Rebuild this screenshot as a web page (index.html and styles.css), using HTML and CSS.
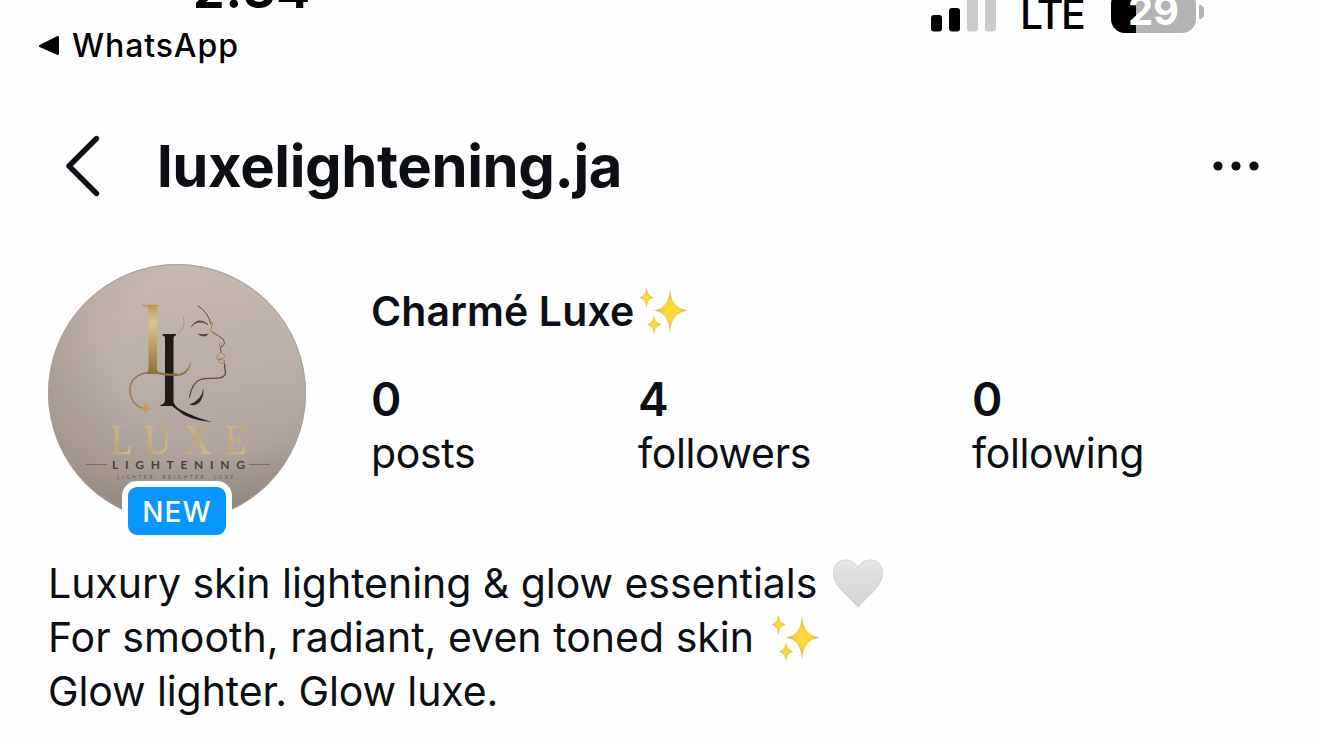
FILE: index.html
```html
<!DOCTYPE html>
<html lang="en">
<head>
<meta charset="utf-8">
<title>luxelightening.ja</title>
<link rel="stylesheet" href="styles.css">
</head>
<body>
<svg class="defs" width="0" height="0" aria-hidden="true">
  <defs>
    <radialGradient id="starFill"><stop offset="0" stop-color="#fde02e"/><stop offset=".45" stop-color="#f8d147"/><stop offset="1" stop-color="#dfa25e"/></radialGradient>
    <symbol id="sparkles" viewBox="0 0 50 50">
      <g fill="url(#starFill)">
        <path d="M31 2Q32 22 48.500 24.500Q32 27 31 47Q30 27 15 24.500Q30 22 31 2Z"/>
        <path d="M7.500 1.500Q8.500 10 14.500 11.500Q8.500 13 7.500 22Q6.500 13 .5 11.500Q6.500 10 7.500 1.500Z"/>
        <path d="M15 29Q16 37 22.500 38.500Q16 40 15 48.500Q14 40 8 38.500Q14 37 15 29Z"/>
      </g>
    </symbol>
  </defs>
</svg>
<header class="status">
  <div class="status-left">
    <div class="time">2:34</div>
    <div class="return">
      <svg width="22" height="22" viewBox="0 0 22 22"><path d="M1.500 10 19 1.200Q21 .5 21 2.500V18.500Q21 20.500 19 19.800L1.500 12Q0 11 1.500 10Z"/></svg>
      <span class="return-label">WhatsApp</span>
    </div>
  </div>
  <div class="status-right">
    <svg class="signal" width="66" height="32" viewBox="0 0 66 32"><rect y="15" width="11" height="16.500" rx="3"/><rect x="18" y="8" width="11" height="23.500" rx="3"/><g fill="#cbcbcb"><rect x="36" y="-4" width="11" height="35.500" rx="3"/><rect x="54" y="-10" width="11" height="41.500" rx="3"/></g></svg>
    <span class="network">LTE</span>
    <div class="battery"><div class="cell"><span>29</span></div><i></i></div>
  </div>
</header>
<nav class="bar">
  <svg class="back" width="36" height="64" viewBox="0 0 36 64"><path d="M31.500 4.500 4 32 31.500 59.500" fill="none" stroke="#0c1014" stroke-width="5.400" stroke-linecap="round" stroke-linejoin="round"/></svg>
  <h1>luxelightening.ja</h1>
  <svg class="more" width="46" height="12" viewBox="0 0 46 12"><g fill="#0c1014"><circle cx="5" cy="6" r="4.600"/><circle cx="23" cy="6" r="4.600"/><circle cx="41" cy="6" r="4.600"/></g></svg>
</nav>
<section class="profile">
  <div class="avatar">
    <svg width="258" height="258" viewBox="48 264 258 258">
      <defs>
        <linearGradient id="paper" x1=".4" y1="0" x2=".55" y2="1"><stop offset="0" stop-color="#c6bab3"/><stop offset=".4" stop-color="#bbb0a9"/><stop offset=".75" stop-color="#b0a59e"/><stop offset="1" stop-color="#968c86"/></linearGradient>
        <radialGradient id="shade" cx=".65" cy=".35" r=".75"><stop offset=".5" stop-color="#786b61" stop-opacity="0"/><stop offset="1" stop-color="#786b61" stop-opacity=".35"/></radialGradient>
        <linearGradient id="gold" x1="0" y1="0" x2="0" y2="1"><stop offset="0" stop-color="#b9975a"/><stop offset=".25" stop-color="#dcc68d"/><stop offset=".6" stop-color="#ba9a5c"/><stop offset="1" stop-color="#8a6c36"/></linearGradient>
        <linearGradient id="letters" x1="0" y1="0" x2="1" y2="1"><stop offset="0" stop-color="#dac596"/><stop offset=".5" stop-color="#c0a473"/><stop offset="1" stop-color="#e0cfab"/></linearGradient>
      </defs>
      <circle cx="177" cy="393" r="129" fill="url(#paper)"/>
      <circle cx="177" cy="393" r="128.500" fill="url(#shade)" stroke="#a6a09f"/>
      <path fill="url(#gold)" d="M141.500 304.800H158.500V306Q157 306.500 157 309V368Q157 372 160 373Q178 377 185 371Q189 368 191.500 360Q191 371 182 375Q174 377.500 158 374H146Q148.500 372 148.500 368V309Q148 306 141.500 306Z"/>
      <path d="M152 372.500C137 372 129 381 130 392C131 402 138 408 145 409" fill="none" stroke="#927344" stroke-width="1.300"/>
      <path d="M178 333.500Q186 327 183.500 317" fill="none" stroke="#a08c70" stroke-width=".8"/>
      <path fill="#1f1b17" d="M162.500 334H176V335.300Q173.500 336 173.500 338V402Q175 408 187 413Q199 419 212 422Q195 420.500 184 415L172 406H160.500V405Q165 404 165 400V338Q165 336 162.500 335.300Z"/>
      <path d="M159 373Q170 376 177 374" fill="none" stroke="#8f7037" stroke-width="2"/>
      <path d="M146 402Q146.500 407.500 152 408.500Q146.500 409.500 146 415Q145.500 409.500 139 408.500Q145.500 407.500 146 402Z" fill="#c29a52"/>
      <g fill="none" stroke="#5d4c3f" stroke-linecap="round">
        <path d="M198 306Q208 312 211 324" stroke-width="1"/>
        <path d="M212 332Q219 336 223 339Q226.500 345 221 346.500Q219.500 349 221 351.500" stroke-width="1"/>
        <path d="M224.500 364Q225 370 225.500 374C222 381 210 377 202 379Q192 382 189.500 397" stroke-width="1.300"/>
        <path d="M191.500 326.500Q198 316 208 324.500Q198 318.500 191.500 326.500" fill="#5d4c3f" stroke-width=".8"/>
      </g>
      <path d="M213 322L210.500 331L216 334M221.500 342Q218.500 344 220 347M221 352L225.500 356.500Q223 359 217.500 359.300Q215.500 355.500 221 352M217.500 359.300Q226 359.500 225 362Q221 366 218 359.500" fill="none" stroke="#a88350" stroke-width="1"/>
      <path d="M197 333.500Q203 335 209 333.500Q206 337.500 201 336Z" fill="#5c4037"/>
      <path d="M203.500 388Q202 400 189 404.800Q199 407 202 398Q204 394 203.500 388Z" fill="#342b25"/>
      <g class="wordmark" fill="url(#letters)">
        <text x="111" y="454" textLength="21" lengthAdjust="spacingAndGlyphs">L</text><text x="144" y="454" textLength="27" lengthAdjust="spacingAndGlyphs">U</text><text x="184" y="454" textLength="27" lengthAdjust="spacingAndGlyphs">X</text><text x="225" y="454" textLength="21" lengthAdjust="spacingAndGlyphs">E</text>
      </g>
      <text class="tagline" x="112" y="468.800" textLength="133">LIGHTENING</text>
      <path d="M86 464.500H107M249 464.500H270" stroke="#806d59" stroke-width="1"/>
      <text class="motto" x="117" y="479" textLength="120">LIGHTER. BRIGHTER. LUXE.</text>
    </svg>
    <span class="badge">NEW</span>
  </div>
  <div class="info">
    <div class="name"><span>Charmé Luxe</span><svg width="50" height="50"><use href="#sparkles"/></svg></div>
    <div class="stats">
      <div class="stat"><b>0</b><span>posts</span></div>
      <div class="stat"><b>4</b><span>followers</span></div>
      <div class="stat"><b>0</b><span>following</span></div>
    </div>
  </div>
</section>
<section class="bio">
  <div class="line"><span class="l1">Luxury skin lightening &amp; glow essentials</span>
    <svg class="heart" width="50" height="50" viewBox="0 0 50 50"><defs><linearGradient id="hg" x1="0" y1="0" x2="0" y2="1"><stop offset="0" stop-color="#e9e9e9"/><stop offset=".3" stop-color="#dedede"/><stop offset="1" stop-color="#d4d4d4"/></linearGradient></defs><path d="M25 9C29 -2 49.500 -3 49.500 14C49.500 28 34 37 25 48.500C16 37 .5 28 .5 14C.5 -3 21 -2 25 9Z" fill="url(#hg)" stroke="#cccccc" stroke-width=".8"/></svg>
  </div>
  <div class="line"><span class="l2">For smooth, radiant, even toned skin</span><svg width="50" height="50"><use href="#sparkles"/></svg></div>
  <div class="line"><span class="l3">Glow lighter. Glow luxe.</span></div>
</section>
</body>
</html>
```
FILE: styles.css
```css
* { box-sizing: border-box; }
body { margin: 0; width: 1320px; height: 742px; overflow: hidden; background: #fefefe; color: #0c1014; font-family: Inter, "Liberation Sans", sans-serif; }
svg { display: block; flex: none; overflow: visible; }
.defs { height: 0; }
.status { display: flex; height: 126px; overflow: hidden; color: #000; }
.status-left { width: 931px; }
.time { margin-top: -30px; padding-left: 193px; font-size: 50px; line-height: 40px; font-weight: 650; letter-spacing: .9px; }
.return { display: flex; align-items: center; gap: 12px; margin-top: 16px; padding-left: 38px; }
.return-label { font-size: 32px; line-height: 40px; font-weight: 500; letter-spacing: .9px; }
.status-right { display: flex; height: 34px; }
.network { margin-left: 23px; width: 91px; font-size: 41px; line-height: 28px; font-weight: 550; letter-spacing: -2.5px; white-space: nowrap; }
.battery { display: flex; align-items: center; gap: 3px; height: 43px; margin-top: -10px; }
.cell { width: 85px; height: 43px; border-radius: 14px; background: linear-gradient(90deg, #000 25px, #b3b3b3 25px); color: #fff; text-align: center; font-size: 40px; line-height: 42px; font-weight: 700; }
.battery i { width: 5px; height: 14px; border-radius: 1px 6px 6px 1px; background: #b3b3b3; }
.bar { display: flex; align-items: center; height: 80px; padding: 0 61px 0 65px; }
.bar h1 { margin: 0 auto 0 56px; font-size: 58px; line-height: 79px; font-weight: 700; letter-spacing: -.38px; }
.profile { display: flex; margin-top: 58px; padding-left: 48px; }
.avatar { position: relative; width: 258px; height: 258px; }
.badge { position: absolute; left: 74px; top: 217px; width: 110px; height: 60px; border: 6px solid #fefefe; border-radius: 15px; background: #0896fc; color: #fff; text-align: center; font-size: 28px; line-height: 50px; font-weight: 550; letter-spacing: 1.2px; }
.wordmark { font-family: "Liberation Serif", serif; font-size: 42px; stroke: #c8b183; stroke-width: .5px; }
.tagline { font-family: Lato, sans-serif; font-size: 12px; font-weight: 700; fill: #4a4039; }
.motto { font-family: Lato, sans-serif; font-size: 5px; fill: #65574c; }
.info { padding: 19px 0 0 65px; }
.name { display: flex; align-items: center; gap: 5px; height: 54px; padding-top: 1px; font-size: 41px; line-height: 54px; font-weight: 600; letter-spacing: .12px; }
.stats { display: grid; grid-template-columns: 267px 334px 200px; margin-top: 35px; }
.stat { display: flex; flex-direction: column; font-size: 41px; line-height: 54px; letter-spacing: -.33px; }
.stat b { font-size: 46px; font-weight: 600; }
.bio { margin-top: 34px; padding-left: 48px; font-size: 41px; line-height: 54px; }
.line { display: flex; align-items: center; gap: 17px; height: 54px; white-space: nowrap; }
.line svg { margin-top: 2px; }
.l1 { letter-spacing: -.04px; }
.l1 + .heart { margin-left: -1px; }
.l2 { letter-spacing: .03px; }
.l3 { letter-spacing: -.1px; }
```
